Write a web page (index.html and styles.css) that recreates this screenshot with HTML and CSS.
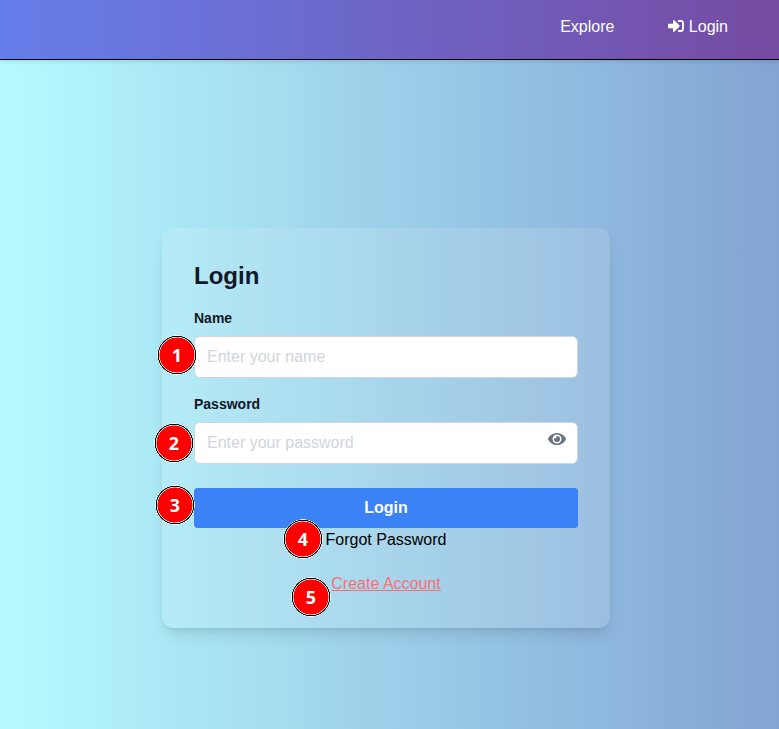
FILE: index.html
```html
<!DOCTYPE html>
<html lang="en">
<head>
<meta charset="utf-8">
<title>Login</title>
<link rel="stylesheet" href="styles.css">
</head>
<body>
<header class="navbar">
  <a class="nav-link" href="#">Explore</a>
  <a class="nav-link" href="#"><svg class="nav-icon" viewBox="0 0 512 512" preserveAspectRatio="none"><path fill="currentColor" d="M416 448h-84c-6.600 0-12-5.400-12-12v-40c0-6.600 5.400-12 12-12h84c17.700 0 32-14.300 32-32V160c0-17.700-14.300-32-32-32h-84c-6.600 0-12-5.400-12-12V76c0-6.600 5.400-12 12-12h84c53 0 96 43 96 96v192c0 53-43 96-96 96zm-47-209L201 71c-15-15-41-4.500-41 17v96H24c-13.300 0-24 10.700-24 24v96c0 13.300 10.700 24 24 24h136v96c0 21.500 26 32 41 17l168-168c9.300-9.400 9.300-24.600 0-34z"/></svg> Login</a>
</header>
<main class="page">
  <form class="card">
    <h2 class="title">Login</h2>
    <label class="label" for="name">Name</label>
    <div class="field"><input class="input" id="name" type="text" placeholder="Enter your name"></div>
    <label class="label" for="password">Password</label>
    <div class="field field-last">
      <input class="input" id="password" type="password" placeholder="Enter your password">
      <svg class="eye" viewBox="0 0 576 512"><path fill="currentColor" d="M572.520 241.400C518.290 135.590 410.930 64 288 64S57.680 135.640 3.480 241.410a32.350 32.350 0 0 0 0 29.190C57.710 376.410 165.070 448 288 448s230.320-71.640 284.520-177.410a32.350 32.350 0 0 0 0-29.190zM288 400a144 144 0 1 1 144-144 143.930 143.930 0 0 1-144 144zm0-240a95.310 95.310 0 0 0-25.310 3.790 47.850 47.850 0 0 1-66.900 66.900A95.780 95.780 0 1 0 288 160z"/></svg>
    </div>
    <button class="submit" type="button">Login</button>
    <a class="forgot" href="#">Forgot Password</a>
    <a class="create" href="#">Create Account</a>
    <span class="badge badge-1">1</span>
    <span class="badge badge-2">2</span>
    <span class="badge badge-3">3</span>
    <span class="badge badge-4">4</span>
    <span class="badge badge-5">5</span>
  </form>
</main>
</body>
</html>
```
FILE: styles.css
```css
* { box-sizing: border-box; }

body {
  margin: 0;
  height: 729px;
  display: flex;
  flex-direction: column;
  overflow: hidden;
  font: 16px/24px "Liberation Sans", Arial, sans-serif;
  background: linear-gradient(90deg, #b6fbff, #83a4d4);
}

.navbar {
  height: 60px;
  flex: none;
  display: flex;
  justify-content: flex-end;
  gap: 54px;
  padding: 15px 51px 0 0;
  background: linear-gradient(90deg, #667eea, #764ba2);
  border-bottom: 1px solid #000;
  box-shadow: 0 2px 4px rgba(0, 0, 0, .1);
}

.nav-link { color: #fff; text-decoration: none; }

.nav-icon { width: 16px; height: 16px; vertical-align: -2px; }

.page { display: flex; justify-content: center; padding: 168px 7px 0 0; }

.card {
  position: relative;
  width: 448px;
  height: 400px;
  padding: 32px;
  display: flex;
  flex-direction: column;
  border-radius: 12px;
  background: rgba(255, 255, 255, .12);
  box-shadow: 0 10px 15px -3px rgba(0, 0, 0, .1), 0 4px 6px -4px rgba(0, 0, 0, .1);
}

.title { margin: 0 0 16px; font-size: 24px; line-height: 32px; color: #111827; }

.label { margin-bottom: 8px; font-size: 14px; line-height: 20px; font-weight: 700; color: #111827; }

.field { position: relative; height: 42px; margin-bottom: 16px; }
.field-last { margin-bottom: 24px; }

.input {
  display: block;
  width: 100%;
  height: 42px;
  padding: 8px 12px;
  border: 1px solid #d1d5db;
  border-radius: 6px;
  background: #fff;
  font: inherit;
}
.input::placeholder { color: #d1d5db; }

.eye { position: absolute; top: 9px; right: 12px; width: 18px; height: 16px; color: #6b7280; }

.submit {
  height: 40px;
  padding: 0;
  border: 0;
  border-radius: 4px;
  background: #3b82f6;
  color: #fff;
  font: inherit;
  font-weight: 700;
}

.forgot { align-self: center; color: #000; text-decoration: none; }

.create { align-self: center; margin-top: 20px; color: #f87171; }

.badge {
  position: absolute;
  width: 40px;
  height: 40px;
  border-radius: 50%;
  background: radial-gradient(circle, #f00 17.200px, #fff 17.800px, #fff 18px, #000 18.400px, #000 19px, #fff 19.400px, #fff 19.600px, transparent 20px);
  color: #fff;
  font: 700 18px/40px "Noto Sans", sans-serif;
  text-align: center;
}
.badge-1 { left: -5px; top: 107px; }
.badge-2 { left: -8px; top: 195px; }
.badge-3 { left: -7px; top: 257px; }
.badge-4 { left: 121px; top: 291px; }
.badge-5 { left: 129px; top: 349px; }
```
